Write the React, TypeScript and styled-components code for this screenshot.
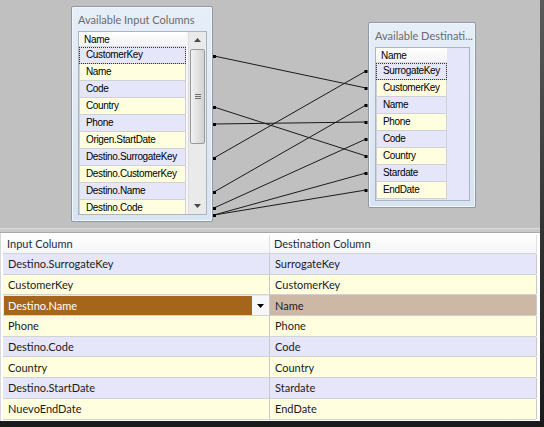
import styled, { createGlobalStyle } from 'styled-components';

const GlobalStyle = createGlobalStyle`
  html, body {
    margin: 0;
    padding: 0;
    overflow: hidden;
    background: #2a2a2a;
  }
`;

const inputColumns = [
  'CustomerKey',
  'Name',
  'Code',
  'Country',
  'Phone',
  'Origen.StartDate',
  'Destino.SurrogateKey',
  'Destino.CustomerKey',
  'Destino.Name',
  'Destino.Code',
];

const destColumns = ['SurrogateKey', 'CustomerKey', 'Name', 'Phone', 'Code', 'Country', 'Stardate', 'EndDate'];

const mappings = [
  { input: 'Destino.SurrogateKey', dest: 'SurrogateKey' },
  { input: 'CustomerKey', dest: 'CustomerKey' },
  { input: 'Destino.Name', dest: 'Name', editing: true },
  { input: 'Phone', dest: 'Phone' },
  { input: 'Destino.Code', dest: 'Code' },
  { input: 'Country', dest: 'Country' },
  { input: 'Destino.StartDate', dest: 'Stardate' },
  { input: 'NuevoEndDate', dest: 'EndDate' },
];

// left y -> right y
const links: [number, number][] = [
  [56, 88],
  [107, 156],
  [124, 122],
  [158, 71],
  [192, 105],
  [208, 139],
  [215, 173],
  [215, 190],
];

export default function App() {
  return (
    <Frame>
      <GlobalStyle />
      <Screen>
        <Canvas>
          <Panel $left={71} $top={6} $width={142} $height={216}>
            <PanelTitle>Available Input Columns</PanelTitle>
            <ListBox>
              <Columns>
                <ListHeader $width={107}>Name</ListHeader>
                {inputColumns.map((c, i) => (
                  <ListRow key={c} $width={107} $alt={i % 2 === 1} $focus={i === 0}>
                    {c}
                  </ListRow>
                ))}
              </Columns>
              <ScrollBar>
                <ScrollArrow>
                  <svg width="7" height="4" viewBox="0 0 7 4">
                    <path d="M0 4 L3.5 0 L7 4 Z" fill="#4a4a4a" />
                  </svg>
                </ScrollArrow>
                <Track>
                  <Thumb>
                    <Grip />
                    <Grip />
                    <Grip />
                  </Thumb>
                </Track>
                <ScrollArrow>
                  <svg width="7" height="4" viewBox="0 0 7 4">
                    <path d="M0 0 L3.5 4 L7 0 Z" fill="#4a4a4a" />
                  </svg>
                </ScrollArrow>
              </ScrollBar>
            </ListBox>
          </Panel>

          <Panel $left={368} $top={22} $width={108} $height={186}>
            <PanelTitle>Available Destinati...</PanelTitle>
            <ListBox $lavender>
              <Columns>
                <ListHeader $width={71}>Name</ListHeader>
                {destColumns.map((c, i) => (
                  <ListRow key={c} $width={71} $alt={i % 2 === 1} $focus={i === 0}>
                    {c}
                  </ListRow>
                ))}
              </Columns>
            </ListBox>
          </Panel>

          <Links width="540" height="228">
            {links.map(([a, b], i) => (
              <g key={i}>
                <line x1="214" y1={a} x2="366" y2={b} stroke="#1a1a1a" strokeWidth="1" />
                <rect x="213" y={a - 1} width="3" height="3" fill="#000" />
                <rect x="364.5" y={b - 1} width="3" height="3" fill="#000" />
              </g>
            ))}
          </Links>
        </Canvas>

        <Splitter />

        <Grid>
          <GridHeader>
            <HeaderCell>Input Column</HeaderCell>
            <HeaderCell>Destination Column</HeaderCell>
          </GridHeader>
          {mappings.map((m, i) => (
            <GridRow key={m.input} $alt={i % 2 === 1}>
              <Cell>
                {m.editing ? (
                  <Combo>
                    <ComboText>{m.input}</ComboText>
                    <ComboButton>
                      <svg width="7" height="4" viewBox="0 0 7 4">
                        <path d="M0 0 L3.5 4 L7 0 Z" fill="#000" />
                      </svg>
                    </ComboButton>
                  </Combo>
                ) : (
                  m.input
                )}
              </Cell>
              <Cell $selected={m.editing}>{m.dest}</Cell>
            </GridRow>
          ))}
        </Grid>
      </Screen>
    </Frame>
  );
}

const Frame = styled.div`
  width: 544px;
  height: 427px;
  box-sizing: border-box;
  padding: 0 4px 6px 0;
  background: linear-gradient(180deg, #5a5a5a 0%, #2e2e2e 60%, #1a1a1a 100%);
`;

const Screen = styled.div`
  width: 540px;
  height: 421px;
  display: flex;
  flex-direction: column;
  background: #ffffff;
  overflow: hidden;
`;

const Canvas = styled.div`
  position: relative;
  height: 228px;
  flex: none;
  background: #c0c0c0;
  overflow: hidden;
`;

const Panel = styled.div<{ $left: number; $top: number; $width: number; $height: number }>`
  position: absolute;
  left: ${(p) => p.$left}px;
  top: ${(p) => p.$top}px;
  width: ${(p) => p.$width}px;
  height: ${(p) => p.$height}px;
  box-sizing: border-box;
  display: flex;
  flex-direction: column;
  padding: 0 5px 6px 6px;
  border: 1px solid #8d99a8;
  border-radius: 2px;
  box-shadow: inset 0 0 0 1px #f4f8fd;
  background: linear-gradient(180deg, #e6eef8 0%, #d9e4f2 100%);
`;

const PanelTitle = styled.div`
  height: 24px;
  flex: none;
  line-height: 26px;
  font-family: Lato, 'Open Sans', sans-serif;
  font-size: 11px;
  color: #6b6b6b;
  white-space: nowrap;
`;

const ListBox = styled.div<{ $lavender?: boolean }>`
  flex: 1;
  min-height: 0;
  display: flex;
  border: 1px solid #aab5c4;
  background: ${(p) => (p.$lavender ? '#e6e6fa' : '#f6f6fb')};
  overflow: hidden;
`;

const Columns = styled.div`
  flex: 1;
  display: flex;
  flex-direction: column;
  overflow: hidden;
`;

const ListHeader = styled.div<{ $width: number }>`
  width: ${(p) => p.$width}px;
  height: 15px;
  flex: none;
  box-sizing: border-box;
  padding-left: 5px;
  line-height: 15px;
  font-family: 'Liberation Sans', Arial, sans-serif;
  font-size: 10px;
  letter-spacing: -0.3px;
  color: #000;
  background: linear-gradient(180deg, #ffffff 0%, #f3f3f5 100%);
  border-bottom: 1px solid #d6d9df;
`;

const ListRow = styled.div<{ $width: number; $alt: boolean; $focus: boolean }>`
  width: ${(p) => p.$width}px;
  height: 17px;
  flex: none;
  box-sizing: border-box;
  padding-left: 6px;
  line-height: 16px;
  font-family: 'Liberation Sans', Arial, sans-serif;
  font-size: 10px;
  letter-spacing: -0.35px;
  color: #000;
  white-space: nowrap;
  background: ${(p) => (p.$alt ? '#ffffe0' : '#e6e6fa')};
  border: 1px solid #d0d0d6;
  border-top: none;
  outline: ${(p) => (p.$focus ? '1px dotted #333' : 'none')};
  outline-offset: -1px;
`;

const ScrollBar = styled.div`
  width: 17px;
  flex: none;
  display: flex;
  flex-direction: column;
  background: #eaeaea;
  border-left: 1px solid #dcdcdc;
`;

const ScrollArrow = styled.div`
  height: 16px;
  flex: none;
  display: flex;
  align-items: center;
  justify-content: center;
`;

const Track = styled.div`
  flex: 1;
  padding-top: 1px;
`;

const Thumb = styled.div`
  height: 95px;
  margin: 0 1px;
  box-sizing: border-box;
  border: 1px solid #9a9a9a;
  border-radius: 2px;
  background: linear-gradient(90deg, #f2f2f2 0%, #e2e2e2 50%, #d2d2d2 100%);
  display: flex;
  flex-direction: column;
  justify-content: center;
  align-items: center;
  gap: 1px;
`;

const Grip = styled.div`
  width: 6px;
  height: 1px;
  background: #6d6d6d;
`;

const Links = styled.svg`
  position: absolute;
  left: 0;
  top: 0;
  pointer-events: none;
`;

const Splitter = styled.div`
  height: 5px;
  flex: none;
  box-sizing: border-box;
  background: #cacaca;
  border-top: 1px solid #dadada;
  border-bottom: 1px solid #a9a9a9;
`;

const Grid = styled.div`
  flex: 1;
  padding: 2px 4px 0 2px;
  background: #ffffff;
  border-left: 1px solid #d8d8d8;
  font-family: Lato, 'Open Sans', sans-serif;
  font-size: 11px;
  color: #1b1b1b;
`;

const GridHeader = styled.div`
  display: grid;
  grid-template-columns: 267px 267px;
  height: 18px;
  background: linear-gradient(180deg, #ffffff 0%, #f4f5f7 100%);
  border-bottom: 1px solid #d5d5d5;
`;

const HeaderCell = styled.div`
  padding-left: 4px;
  line-height: 18px;
  color: #1e2b3c;
  border-right: 1px solid #e0e0e0;
`;

const GridRow = styled.div<{ $alt: boolean }>`
  display: grid;
  grid-template-columns: 267px 267px;
  height: 20.7px;
  box-sizing: border-box;
  background: ${(p) => (p.$alt ? '#ffffe0' : '#e6e6fa')};
  border-bottom: 1px solid #d2d2d2;
`;

const Cell = styled.div<{ $selected?: boolean }>`
  display: flex;
  align-items: center;
  padding-left: 5px;
  border-right: 1px solid #c8c8c8;
  background: ${(p) => (p.$selected ? '#cdb8a5' : 'transparent')};
  white-space: nowrap;
  overflow: hidden;

  &:has(> div) {
    padding: 1px 0 0 1px;
  }
`;

const Combo = styled.div`
  flex: 1;
  align-self: stretch;
  display: flex;
`;

const ComboText = styled.div`
  flex: 1;
  display: flex;
  align-items: center;
  padding-left: 4px;
  background: #a5661c;
  color: #ffffff;
`;

const ComboButton = styled.div`
  width: 17px;
  display: flex;
  align-items: center;
  justify-content: center;
  background: #f7f7f7;
`;
